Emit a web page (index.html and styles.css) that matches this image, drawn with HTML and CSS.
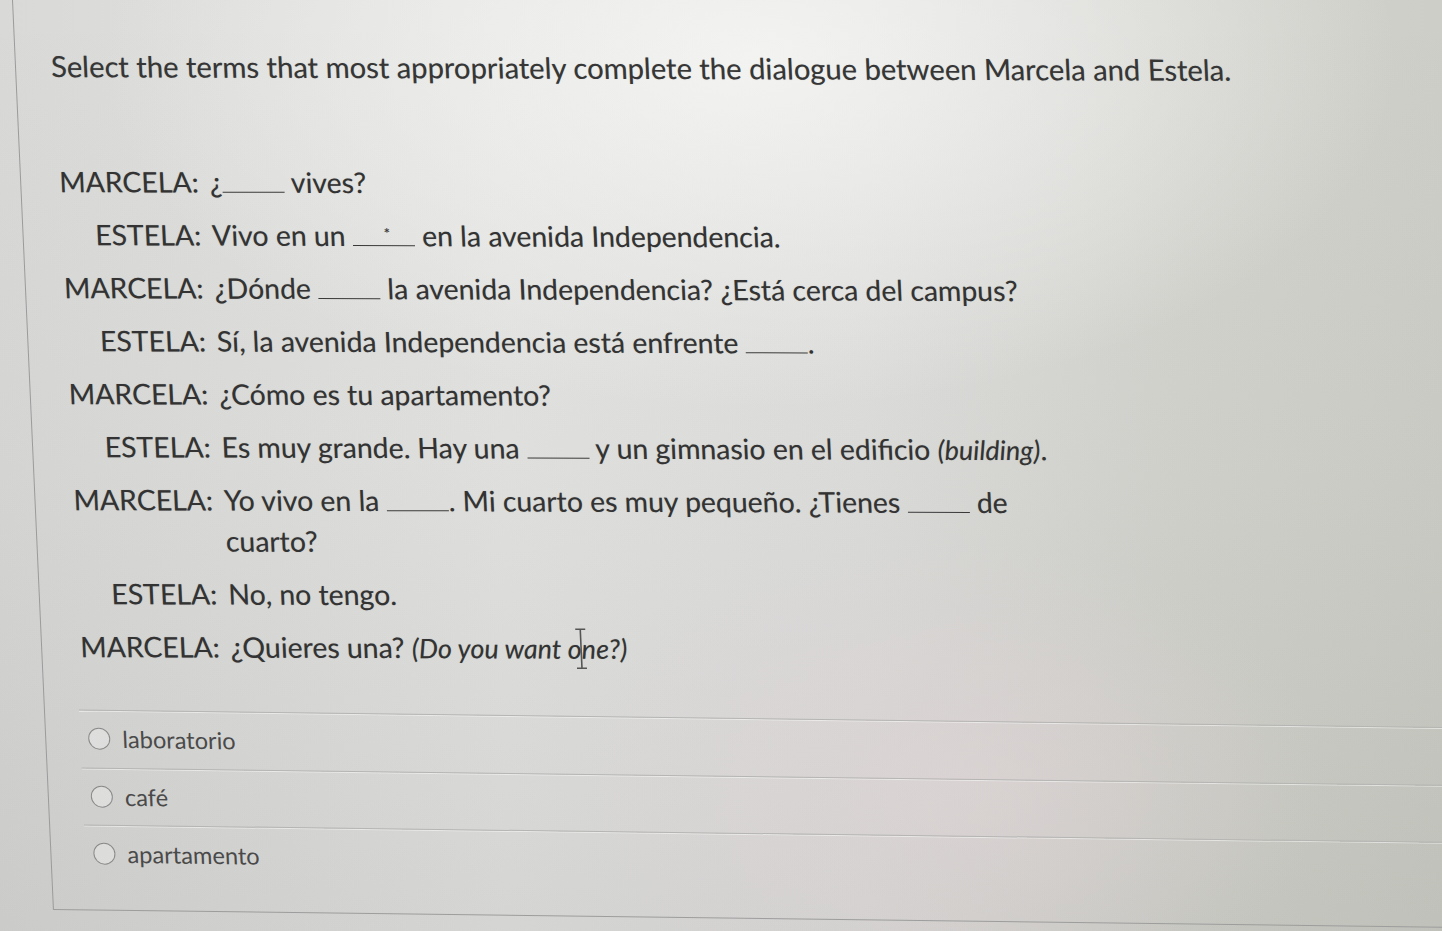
FILE: index.html
```html
<!DOCTYPE html>
<html lang="es">
<head>
<meta charset="utf-8">
<title>Select the terms</title>
<link rel="stylesheet" href="styles.css">
</head>
<body>
<div class="screen">
  <section class="card">
    <p class="prompt">Select the terms that most appropriately complete the dialogue between Marcela and Estela.</p>
    <div class="dialogue">
      <div class="row"><span class="who">MARCELA:</span><span class="line">¿<span class="blank"></span> vives?</span></div>
      <div class="row"><span class="who">ESTELA:</span><span class="line">Vivo en un <span class="blank"><span class="mark">*</span></span> en la avenida Independencia.</span></div>
      <div class="row"><span class="who">MARCELA:</span><span class="line">¿Dónde <span class="blank"></span> la avenida Independencia? ¿Está cerca del campus?</span></div>
      <div class="row"><span class="who">ESTELA:</span><span class="line">Sí, la avenida Independencia está enfrente <span class="blank"></span>.</span></div>
      <div class="row"><span class="who">MARCELA:</span><span class="line">¿Cómo es tu apartamento?</span></div>
      <div class="row"><span class="who">ESTELA:</span><span class="line">Es muy grande. Hay una <span class="blank"></span> y un gimnasio en el edificio <em>(building)</em>.</span></div>
      <div class="row"><span class="who">MARCELA:</span><span class="line">Yo vivo en la <span class="blank"></span>. Mi cuarto es muy pequeño. ¿Tienes <span class="blank"></span> de cuarto?</span></div>
      <div class="row"><span class="who">ESTELA:</span><span class="line">No, no tengo.</span></div>
      <div class="row"><span class="who">MARCELA:</span><span class="line">¿Quieres una? <em>(Do you want <span class="cursor-host">one<svg class="ibeam" viewBox="0 0 14 42" width="14" height="42" aria-hidden="true"><path d="M2 1.5h10M7 1.5v39M2 40.5h10" fill="none" stroke="#555" stroke-width="1.6"/></svg></span>?)</em></span></div>
    </div>
    <ul class="options">
      <li class="option"><span class="radio"></span><span class="label">laboratorio</span></li>
      <li class="option"><span class="radio"></span><span class="label">café</span></li>
      <li class="option"><span class="radio"></span><span class="label">apartamento</span></li>
    </ul>
  </section>
</div>
</body>
</html>
```

FILE: styles.css
```css
html, body {
  margin: 0;
  padding: 0;
  overflow: hidden;
  background: #d6d6d5;
}

body {
  width: 1442px;
  height: 931px;
  font-family: Lato, "Open Sans", "Liberation Sans", sans-serif;
  color: #333333;
}

.screen {
  position: relative;
  width: 1442px;
  height: 931px;
  overflow: hidden;
  background:
    radial-gradient(ellipse 45% 38% at 52% 6%, rgba(246,246,245,0.85) 0%, rgba(242,242,241,0.45) 55%, rgba(242,242,241,0) 100%),
    radial-gradient(ellipse 26% 26% at 66% 84%, rgba(224,212,214,0.6) 0%, rgba(224,212,214,0) 100%),
    linear-gradient(180deg, rgba(60,60,50,0) 0%, rgba(60,60,50,0.03) 50%, rgba(60,60,50,0.09) 100%),
    linear-gradient(90deg, #d9d9d8 0%, #e4e4e3 35%, #dfdfde 60%, #d3d4ce 82%, #cdcec7 100%);
}

.card {
  box-sizing: border-box;
  width: 1480px;
  margin-left: 12px;
  border-left: 1.5px solid #9b9b9b;
  padding: 0 0 0 35px;
  transform: matrix(1, 0.0032, 0.045, 1, 0, 0);
  transform-origin: 0 0;
}

.prompt {
  margin: 0;
  padding-top: 48px;
  font-size: 29.2px;
  line-height: 35px;
  color: #363636;
  text-shadow: 0 0 0.8px rgba(40,40,40,0.35);
}

.dialogue {
  margin-top: 78px;
  display: flex;
  flex-direction: column;
  gap: 12px;
}

.row {
  display: grid;
  grid-template-columns: 142.5px 850px;
  column-gap: 11px;
  font-size: 28.4px;
  line-height: 41px;
  text-shadow: 0 0 0.8px rgba(40,40,40,0.35);
}

.who {
  text-align: right;
}

.line em {
  font-style: italic;
  font-size: 27px;
}

.blank {
  position: relative;
  display: inline-block;
  width: 62px;
  height: 20px;
  border-bottom: 1.5px solid #3a3a3a;
  vertical-align: baseline;
}

.mark {
  position: absolute;
  left: 31px;
  top: 1px;
  font-size: 15px;
  line-height: 15px;
}

.cursor-host {
  position: relative;
}

.ibeam {
  position: absolute;
  left: 6px;
  top: -4px;
}

.options {
  list-style: none;
  margin: 42px 0 0 -35px;
  padding: 0 0 27px 34px;
  border-bottom: 1.5px solid #9d9d9d;
  transform: skewY(0.55deg);
  transform-origin: 0 0;
}

.option {
  display: flex;
  align-items: center;
  gap: 12px;
  height: 56.5px;
  padding-left: 8px;
  border-top: 1px solid #b5b5b3;
  box-shadow: inset 0 1px 0 rgba(250,250,250,0.55);
  font-size: 23.6px;
  color: #4a4a4a;
}

.radio {
  width: 20px;
  height: 20px;
  border: 1.7px solid #8a8a8a;
  border-radius: 50%;
  background: rgba(245,245,245,0.35);
  flex: none;
}
```
